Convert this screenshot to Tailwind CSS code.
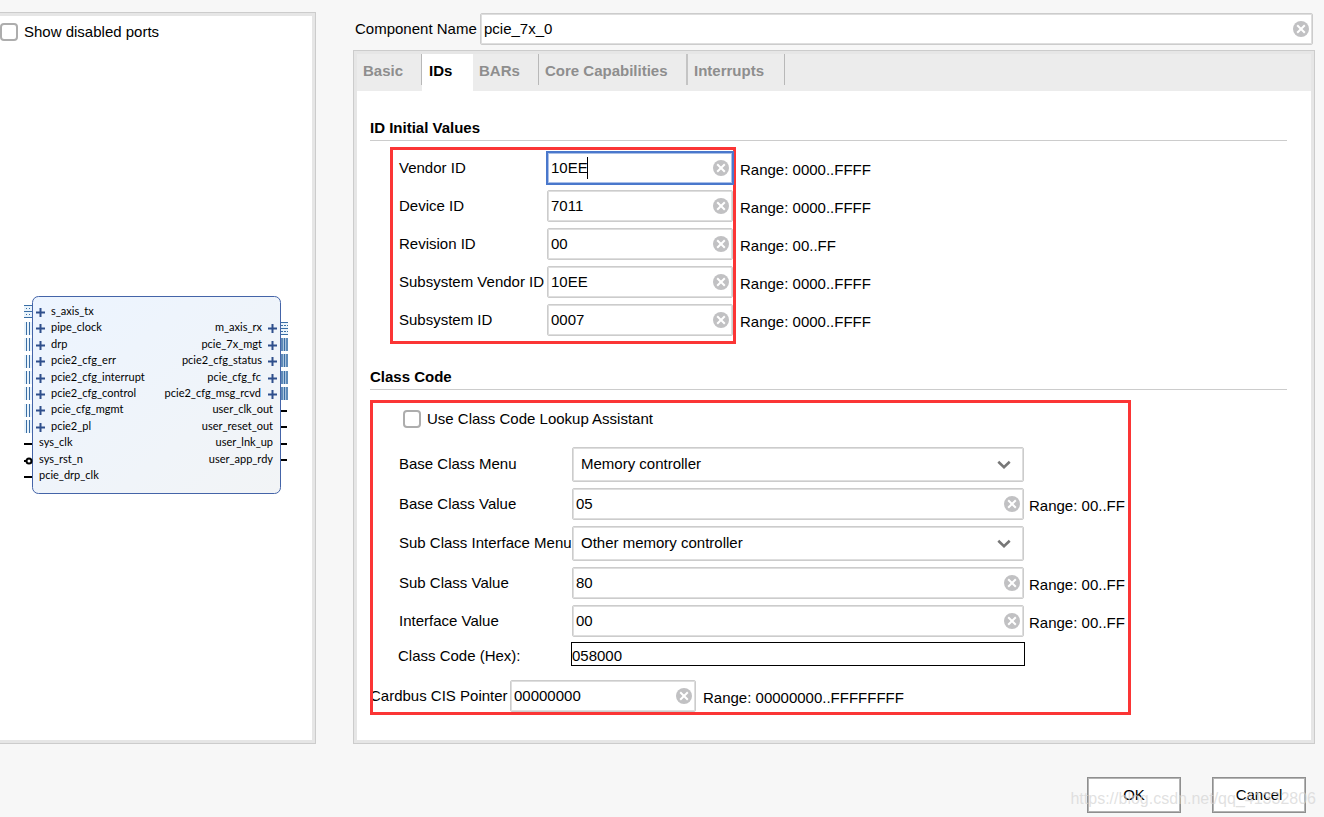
<!DOCTYPE html>
<html lang="en">
<head>
<meta charset="utf-8">
<meta name="viewport" content="width=device-width, initial-scale=1">
<title>Customize IP</title>
<script src="https://cdn.jsdelivr.net/npm/@tailwindcss/browser@4"></script>
</head>
<body class="relative flex min-h-screen flex-col bg-[#f7f7f7] font-['Liberation_Sans',Arial,sans-serif] text-[15px] leading-5 text-black">

<svg class="hidden" aria-hidden="true">
  <symbol id="clear" viewBox="0 0 16 16"><circle cx="8" cy="8" r="8" fill="#c1c1c3"/><path d="M4.2 4.2l7.6 7.6M11.8 4.2l-7.6 7.6" stroke="#fff" stroke-width="2"/></symbol>
  <symbol id="chevron" viewBox="0 0 14 10"><path d="M1.3 1.8L7 7.2l5.700-5.400" fill="none" stroke="#777" stroke-width="2.600"/></symbol>
  <symbol id="plus" viewBox="0 0 9 9"><path d="M4.500 0v9M0 4.500h9" stroke="#2f4f8c" stroke-width="2"/></symbol>
  <symbol id="busL" viewBox="0 0 8 13"><path d="M0 0h8v13H0z" fill="#eaf4fb"/><path d="M2.500 0v13M5.500 0v13" stroke="#3a6ea5"/></symbol>
  <symbol id="busR" viewBox="0 0 7 13"><path d="M0 0h7v13H0z" fill="#cfe0f0"/><path d="M1 0v13M3.500 0v13M6 0v13" stroke="#3a6ea5" stroke-width="1.500"/></symbol>
  <symbol id="stream" viewBox="0 0 8 13"><path d="M0 0h8v13H0z" fill="#eaf4fb"/><path d="M0 .5h8M0 6.500h8M0 12.500h8" stroke="#3a6ea5"/><path d="M2 3.500h5M2 9.500h5" stroke="#3a6ea5" stroke-dasharray="1 2"/></symbol>
  <symbol id="streamR" viewBox="0 0 7 13"><path d="M0 0h7v13H0z" fill="#eaf4fb"/><path d="M0 .5h7M0 6.500h7M0 12.500h7" stroke="#3a6ea5"/><path d="M0 3.500h7M0 9.500h7" stroke="#3a6ea5" stroke-dasharray="2 1"/></symbol>
</svg>

<div class="flex flex-1 gap-[37px] pt-3 pr-[9px]">
  <aside class="flex w-[316px] shrink-0 flex-col border border-l-0 border-[#ccc] bg-white pt-[9px] shadow-[inset_-3px_0_0_#e6e6e6,inset_0_3px_0_#e6e6e6,inset_0_-3px_0_#e6e6e6]">
    <label class="flex items-center gap-[6px]">
      <input type="checkbox" class="size-[18px] appearance-none rounded-[4px] border-2 border-[#adadad] bg-white">Show disabled ports
    </label>
    <div class="flex flex-1 items-center justify-center pt-1 pr-[3px]">
      <svg width="264" height="200" viewBox="0 0 264 200" role="img" aria-label="pcie_7x_0 block symbol" class="font-[Lato,sans-serif] text-[11px]">
        <defs><linearGradient id="body" x1="0" y1="0" x2="1" y2="1"><stop offset="0" stop-color="#ecf4ff"/><stop offset="1" stop-color="#f2f4f6"/></linearGradient></defs>
        <rect x="8.500" y="1.500" width="248" height="197" rx="6" fill="url(#body)" stroke="#4464a8"/>
        <use href="#stream" x="0" y="10" width="8" height="13"/>
        <use href="#busL" x="0" y="27" width="8" height="13"/>
        <use href="#busL" x="0" y="43" width="8" height="13"/>
        <use href="#busL" x="0" y="60" width="8" height="13"/>
        <use href="#busL" x="0" y="76" width="8" height="13"/>
        <use href="#busL" x="0" y="92" width="8" height="13"/>
        <use href="#busL" x="0" y="109" width="8" height="13"/>
        <use href="#busL" x="0" y="125" width="8" height="13"/>
        <use href="#plus" x="12" y="13" width="9" height="9"/>
        <use href="#plus" x="12" y="29" width="9" height="9"/>
        <use href="#plus" x="12" y="46" width="9" height="9"/>
        <use href="#plus" x="12" y="62" width="9" height="9"/>
        <use href="#plus" x="12" y="79" width="9" height="9"/>
        <use href="#plus" x="12" y="95" width="9" height="9"/>
        <use href="#plus" x="12" y="111" width="9" height="9"/>
        <use href="#plus" x="12" y="128" width="9" height="9"/>
        <path d="M0 149h8M0 182h8M0 166h3" stroke="#000" stroke-width="2"/>
        <circle cx="5" cy="166" r="2.500" fill="#fff" stroke="#000" stroke-width="2"/>
        <text x="27" y="20">s_axis_tx</text>
        <text x="27" y="36">pipe_clock</text>
        <text x="27" y="53">drp</text>
        <text x="27" y="69">pcie2_cfg_err</text>
        <text x="27" y="86">pcie2_cfg_interrupt</text>
        <text x="27" y="102">pcie2_cfg_control</text>
        <text x="27" y="118">pcie_cfg_mgmt</text>
        <text x="27" y="135">pcie2_pl</text>
        <text x="15" y="151">sys_clk</text>
        <text x="15" y="168">sys_rst_n</text>
        <text x="15" y="184">pcie_drp_clk</text>
        <g text-anchor="end">
          <text x="238" y="36">m_axis_rx</text>
          <text x="238" y="53">pcie_7x_mgt</text>
          <text x="238" y="69">pcie2_cfg_status</text>
          <text x="237" y="86">pcie_cfg_fc</text>
          <text x="237" y="102">pcie2_cfg_msg_rcvd</text>
          <text x="249" y="118">user_clk_out</text>
          <text x="249" y="135">user_reset_out</text>
          <text x="249" y="151">user_lnk_up</text>
          <text x="249" y="168">user_app_rdy</text>
        </g>
        <use href="#plus" x="244" y="29" width="9" height="9"/>
        <use href="#plus" x="244" y="46" width="9" height="9"/>
        <use href="#plus" x="244" y="62" width="9" height="9"/>
        <use href="#plus" x="244" y="79" width="9" height="9"/>
        <use href="#plus" x="244" y="95" width="9" height="9"/>
        <use href="#streamR" x="257" y="27" width="7" height="13"/>
        <use href="#busR" x="257" y="43" width="7" height="13"/>
        <use href="#busR" x="257" y="59" width="7" height="13"/>
        <use href="#busR" x="257" y="76" width="7" height="13"/>
        <use href="#busR" x="257" y="92" width="7" height="13"/>
        <path d="M257 116h6M257 132h6M257 149h6M257 165h6" stroke="#000" stroke-width="2"/>
      </svg>
    </div>
  </aside>

  <main class="flex min-w-0 flex-1 flex-col">
    <div class="mt-px mr-[2px] flex items-center pl-[2px]">
      <label for="cname" class="w-[125px] shrink-0">Component Name</label>
      <div class="relative flex-1">
        <input id="cname" value="pcie_7x_0" class="block h-8 w-full rounded-[2px] border border-[#ccc] bg-white pr-8 pb-[2px] pl-[3px] shadow-[inset_0_0_0_1px_#dedede]">
        <button aria-label="Clear component name" class="absolute top-2 right-1 size-4"><svg class="size-4"><use href="#clear"/></svg></button>
      </div>
    </div>

    <section class="mt-[5px] flex-1 border border-[#ccc] bg-white p-[3px] shadow-[inset_0_0_0_3px_#e6e6e6]">
      <div role="tablist" class="flex h-[37px] items-start bg-[#ececec] font-bold text-[#8e8e8e]">
        <button role="tab" class="h-[31px] w-[65px] border-r border-[#b8b8b8] pt-[2px] pl-[6px] text-left">Basic</button>
        <button role="tab" aria-selected="true" class="h-[37px] w-[51px] bg-white pb-1 pl-[7px] text-left text-black">IDs</button>
        <button role="tab" class="h-[31px] w-[66px] border-r border-[#b8b8b8] pt-[2px] pl-[6px] text-left">BARs</button>
        <button role="tab" class="h-[31px] w-[149px] border-r-2 border-[#c4c4c4] pt-[2px] pl-[6px] text-left whitespace-nowrap">Core Capabilities</button>
        <button role="tab" class="h-[31px] w-[97px] border-r border-[#b8b8b8] pt-[2px] pl-[6px] text-left">Interrupts</button>
      </div>

      <div class="pt-[27px] pr-6 pl-[13px]">
        <h2 class="h-[23px] border-b border-[#ccc] font-bold">ID Initial Values</h2>
        <div class="relative mt-[11px] flex flex-col gap-[6px] pl-[29px]">
          <div class="pointer-events-none absolute -top-[5px] left-5 h-[197px] w-[346px] border-3 border-[#fb3535]"></div>
          <div class="flex h-8 items-center">
            <label for="vid" class="w-[148px] shrink-0">Vendor ID</label>
            <div class="relative w-[186px]">
              <input id="vid" value="10EE" class="block h-8 w-full border border-[#4a78cc] bg-white pb-[2px] pl-[3px] shadow-[inset_0_0_0_1px_#a9bfe8] ring-1 ring-[#4a78cc]">
              <span class="absolute top-[5px] left-10 h-[22px] w-px bg-black"></span>
              <button aria-label="Clear vendor ID" class="absolute top-2 right-1 size-4"><svg class="size-4"><use href="#clear"/></svg></button>
            </div>
            <span class="pt-1 pl-[7px]">Range: 0000..FFFF</span>
          </div>
          <div class="flex h-8 items-center">
            <label for="did" class="w-[148px] shrink-0">Device ID</label>
            <div class="relative w-[186px]">
              <input id="did" value="7011" class="block h-8 w-full rounded-[2px] border border-[#ccc] bg-white pb-[2px] pl-[3px] shadow-[inset_0_0_0_1px_#dedede]">
              <button aria-label="Clear device ID" class="absolute top-2 right-1 size-4"><svg class="size-4"><use href="#clear"/></svg></button>
            </div>
            <span class="pt-1 pl-[7px]">Range: 0000..FFFF</span>
          </div>
          <div class="flex h-8 items-center">
            <label for="rid" class="w-[148px] shrink-0">Revision ID</label>
            <div class="relative w-[186px]">
              <input id="rid" value="00" class="block h-8 w-full rounded-[2px] border border-[#ccc] bg-white pb-[2px] pl-[3px] shadow-[inset_0_0_0_1px_#dedede]">
              <button aria-label="Clear revision ID" class="absolute top-2 right-1 size-4"><svg class="size-4"><use href="#clear"/></svg></button>
            </div>
            <span class="pt-1 pl-[7px]">Range: 00..FF</span>
          </div>
          <div class="flex h-8 items-center">
            <label for="svid" class="w-[148px] shrink-0 whitespace-nowrap">Subsystem Vendor ID</label>
            <div class="relative w-[186px]">
              <input id="svid" value="10EE" class="block h-8 w-full rounded-[2px] border border-[#ccc] bg-white pb-[2px] pl-[3px] shadow-[inset_0_0_0_1px_#dedede]">
              <button aria-label="Clear subsystem vendor ID" class="absolute top-2 right-1 size-4"><svg class="size-4"><use href="#clear"/></svg></button>
            </div>
            <span class="pt-1 pl-[7px]">Range: 0000..FFFF</span>
          </div>
          <div class="flex h-8 items-center">
            <label for="sid" class="w-[148px] shrink-0">Subsystem ID</label>
            <div class="relative w-[186px]">
              <input id="sid" value="0007" class="block h-8 w-full rounded-[2px] border border-[#ccc] bg-white pb-[2px] pl-[3px] shadow-[inset_0_0_0_1px_#dedede]">
              <button aria-label="Clear subsystem ID" class="absolute top-2 right-1 size-4"><svg class="size-4"><use href="#clear"/></svg></button>
            </div>
            <span class="pt-1 pl-[7px]">Range: 0000..FFFF</span>
          </div>
        </div>

        <h2 class="mt-[31px] h-[23px] border-b border-[#ccc] font-bold">Class Code</h2>
        <div class="relative mt-[10px] h-[315px] w-[761px] pt-[9px]">
          <div class="flex flex-col gap-[6px] pl-[29px]">
            <label class="mb-3 flex h-5 items-center gap-[6px] pl-1">
              <input type="checkbox" class="size-[18px] appearance-none rounded-[4px] border-2 border-[#adadad] bg-white">Use Class Code Lookup Assistant
            </label>
            <div class="flex h-[35px] items-center">
              <label for="bcm" class="w-[173px] shrink-0 pb-[2px]">Base Class Menu</label>
              <div class="relative w-[452px]">
                <select id="bcm" class="block h-[35px] w-full appearance-none rounded-[2px] border border-[#ccc] bg-white pb-[2px] pl-2 shadow-[inset_0_0_0_1px_#dedede]"><option>Memory controller</option></select>
                <svg class="pointer-events-none absolute top-[13px] right-[13px] h-[10px] w-[14px]"><use href="#chevron"/></svg>
              </div>
            </div>
            <div class="flex h-8 items-center">
              <label for="bcv" class="w-[173px] shrink-0">Base Class Value</label>
              <div class="relative w-[452px]">
                <input id="bcv" value="05" class="block h-8 w-full rounded-[2px] border border-[#ccc] bg-white pb-[2px] pl-[3px] shadow-[inset_0_0_0_1px_#dedede]">
                <button aria-label="Clear base class value" class="absolute top-2 right-1 size-4"><svg class="size-4"><use href="#clear"/></svg></button>
              </div>
              <span class="pt-1 pl-[5px]">Range: 00..FF</span>
            </div>
            <div class="flex h-[35px] items-center">
              <label for="scm" class="w-[173px] shrink-0 pb-[2px] whitespace-nowrap">Sub Class Interface Menu</label>
              <div class="relative w-[452px]">
                <select id="scm" class="block h-[35px] w-full appearance-none rounded-[2px] border border-[#ccc] bg-white pb-[2px] pl-2 shadow-[inset_0_0_0_1px_#dedede]"><option>Other memory controller</option></select>
                <svg class="pointer-events-none absolute top-[13px] right-[13px] h-[10px] w-[14px]"><use href="#chevron"/></svg>
              </div>
            </div>
            <div class="flex h-8 items-center">
              <label for="scv" class="w-[173px] shrink-0">Sub Class Value</label>
              <div class="relative w-[452px]">
                <input id="scv" value="80" class="block h-8 w-full rounded-[2px] border border-[#ccc] bg-white pb-[2px] pl-[3px] shadow-[inset_0_0_0_1px_#dedede]">
                <button aria-label="Clear sub class value" class="absolute top-2 right-1 size-4"><svg class="size-4"><use href="#clear"/></svg></button>
              </div>
              <span class="pt-1 pl-[5px]">Range: 00..FF</span>
            </div>
            <div class="flex h-8 items-center">
              <label for="ifv" class="w-[173px] shrink-0">Interface Value</label>
              <div class="relative w-[452px]">
                <input id="ifv" value="00" class="block h-8 w-full rounded-[2px] border border-[#ccc] bg-white pb-[2px] pl-[3px] shadow-[inset_0_0_0_1px_#dedede]">
                <button aria-label="Clear interface value" class="absolute top-2 right-1 size-4"><svg class="size-4"><use href="#clear"/></svg></button>
              </div>
              <span class="pt-1 pl-[5px]">Range: 00..FF</span>
            </div>
          </div>
          <div class="mt-[5px] flex h-6 items-center pl-7">
            <label for="hex" class="w-[173px] shrink-0 pt-[3px]">Class Code (Hex):</label>
            <input id="hex" value="058000" readonly class="block h-6 w-[454px] border border-black bg-white pt-[3px]">
          </div>
          <div class="mt-[14px] flex h-8 items-center">
            <label for="cis" class="w-[140px] shrink-0 whitespace-nowrap">Cardbus CIS Pointer</label>
            <div class="relative w-[186px]">
              <input id="cis" value="00000000" class="block h-8 w-full rounded-[2px] border border-[#ccc] bg-white pb-[2px] pl-[3px] shadow-[inset_0_0_0_1px_#dedede]">
              <button aria-label="Clear Cardbus CIS pointer" class="absolute top-2 right-1 size-4"><svg class="size-4"><use href="#clear"/></svg></button>
            </div>
            <span class="pt-1 pl-[7px]">Range: 00000000..FFFFFFFF</span>
          </div>
          <div class="pointer-events-none absolute inset-0 border-3 border-[#fb3535]"></div>
        </div>
      </div>
    </section>
  </main>
</div>

<footer class="flex justify-end gap-[31px] pt-[33px] pr-[18px] pb-1">
  <button class="h-9 w-[94px] border border-[#8f8f8f] bg-white shadow-[inset_0_0_0_1px_#b4b4b4]">OK</button>
  <button class="h-9 w-[94px] border border-[#8f8f8f] bg-white shadow-[inset_0_0_0_1px_#b4b4b4]">Cancel</button>
</footer>
<div class="pointer-events-none absolute right-2 bottom-2 text-base leading-5 text-[#d4d4d4]/70">https://blog.csdn.net/qq_41332806</div>
</body>
</html>
